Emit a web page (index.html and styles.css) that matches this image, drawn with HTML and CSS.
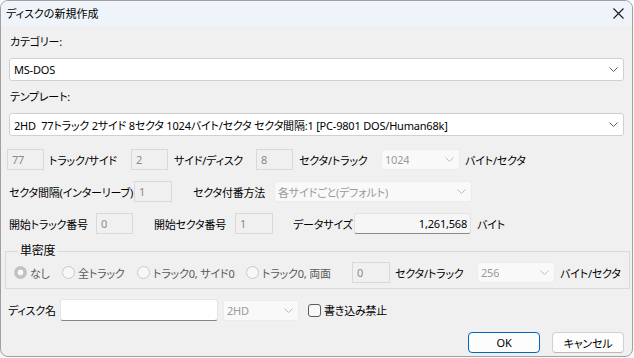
FILE: index.html
```html
<!DOCTYPE html>
<html lang="ja">
<head>
    <meta charset="UTF-8">
    <title>ディスクの新規作成</title>
    <link rel="stylesheet" href="styles.css">
</head>
<body>
<div class="window">
    <div class="titlebar">
        <span class="title">ディスクの新規作成</span>
        <svg class="close" width="11" height="11" viewBox="0 0 11 11">
            <path d="M0.5 0.5 L10.5 10.5 M10.5 0.5 L0.5 10.5" stroke="#1b1b1b" stroke-width="1.1" fill="none"/>
        </svg>
    </div>
    <div class="content">
        <div class="caption cap-top">カテゴリー:</div>
        <div class="combo wide">
            <span class="combo-text">MS-DOS</span>
            <svg class="chev" width="9" height="5" viewBox="0 0 9 5"><path d="M0.5 0.5 L4.5 4.5 L8.5 0.5" stroke="#5e5e5e" fill="none"/></svg>
        </div>
        <div class="caption">テンプレート:</div>
        <div class="combo wide">
            <span class="combo-text">2HD&nbsp; 77トラック 2サイド 8セクタ 1024バイト/セクタ セクタ間隔:1 [PC-9801 DOS/Human68k]</span>
            <svg class="chev" width="9" height="5" viewBox="0 0 9 5"><path d="M0.5 0.5 L4.5 4.5 L8.5 0.5" stroke="#5e5e5e" fill="none"/></svg>
        </div>

        <div class="row row-first">
            <span class="edit w37">77</span>
            <span class="lbl ml5 w82">トラック/サイド</span>
            <span class="edit w37">2</span>
            <span class="lbl ml6 w82">サイド/ディスク</span>
            <span class="edit w37">8</span>
            <span class="lbl ml6 w82">セクタ/トラック</span>
            <div class="combo off w79">
                <span class="combo-text">1024</span>
                <svg class="chev" width="9" height="5" viewBox="0 0 9 5"><path d="M0.5 0.5 L4.5 4.5 L8.5 0.5" stroke="#bdbdbd" fill="none"/></svg>
            </div>
            <span class="lbl ml5">バイト/セクタ</span>
        </div>

        <div class="row">
            <span class="lbl ml2 w125">セクタ間隔(インターリーブ)</span>
            <span class="edit w38">1</span>
            <span class="lbl ml21 w81">セクタ付番方法</span>
            <div class="combo off w198">
                <span class="combo-text">各サイドごと(デフォルト)</span>
                <svg class="chev" width="9" height="5" viewBox="0 0 9 5"><path d="M0.5 0.5 L4.5 4.5 L8.5 0.5" stroke="#bdbdbd" fill="none"/></svg>
            </div>
        </div>

        <div class="row">
            <span class="lbl ml2 w87">開始トラック番号</span>
            <span class="edit w37">0</span>
            <span class="lbl ml21 w81">開始セクタ番号</span>
            <span class="edit w38">1</span>
            <span class="lbl ml20 w61">データサイズ</span>
            <span class="readout">1,261,568</span>
            <span class="lbl ml6">バイト</span>
        </div>

        <fieldset class="group">
            <legend>単密度</legend>
            <div class="row">
                <label class="opt w48"><span class="radio on"></span>なし</label>
                <label class="opt w75"><span class="radio"></span>全トラック</label>
                <label class="opt w109"><span class="radio"></span>トラック0, サイド0</label>
                <label class="opt w106"><span class="radio"></span>トラック0, 両面</label>
                <span class="edit w38">0</span>
                <span class="lbl ml5 w82">セクタ/トラック</span>
                <div class="combo off w78">
                    <span class="combo-text">256</span>
                    <svg class="chev" width="9" height="5" viewBox="0 0 9 5"><path d="M0.5 0.5 L4.5 4.5 L8.5 0.5" stroke="#bdbdbd" fill="none"/></svg>
                </div>
                <span class="lbl ml5">バイト/セクタ</span>
            </div>
        </fieldset>

        <div class="row row-name">
            <span class="lbl ml1 w52">ディスク名</span>
            <span class="textbox"></span>
            <div class="combo off w76 ml5">
                <span class="combo-text">2HD</span>
                <svg class="chev" width="9" height="5" viewBox="0 0 9 5"><path d="M0.5 0.5 L4.5 4.5 L8.5 0.5" stroke="#bdbdbd" fill="none"/></svg>
            </div>
            <label class="check"><span class="box"></span>書き込み禁止</label>
        </div>

        <div class="buttons">
            <span class="btn default">OK</span>
            <span class="btn">キャンセル</span>
        </div>
    </div>
</div>
</body>
</html>
```

FILE: styles.css
```css
* {
    box-sizing: border-box;
}

body {
    margin: 0;
    background: #f9f9f9;
    font-family: "Noto Sans", "Noto Sans CJK JP", sans-serif;
    font-size: 11px;
    letter-spacing: -0.2px;
    color: #000;
    font-feature-settings: "palt";
}

.window {
    width: 633px;
    height: 357px;
    border: 1px solid #a0a0a0;
    border-radius: 8px;
    background: #f0f0f0;
    overflow: hidden;
}

.titlebar {
    height: 25px;
    background: #eef4f9;
    display: flex;
    align-items: center;
    justify-content: space-between;
    padding: 0 8px 0 5px;
}

.title {
    line-height: 25px;
    letter-spacing: 0;
}

.content {
    padding: 0 8px 0 6px;
}

.caption {
    height: 22px;
    line-height: 22px;
    padding-left: 3px;
    margin-top: 5px;
}

.combo {
    height: 23px;
    display: flex;
    align-items: center;
    justify-content: space-between;
    background: #fff;
    border: 1px solid #d0d0d0;
    border-radius: 3px;
    padding: 0 5px 0 4px;
    white-space: nowrap;
}

.combo.wide {
    margin-top: 5px;
    margin-left: 2px;
    width: 615px;
}

.combo.off {
    height: 21px;
    background: #f9f9f9;
    border-color: #ebebeb;
    color: #9a9a9a;
    padding-left: 3px;
}

.combo-text {
    overflow: hidden;
}

.chev {
    flex: none;
}

.row {
    display: flex;
    align-items: center;
    height: 21px;
    margin-top: 11px;
    white-space: nowrap;
}

.row-first {
    margin-top: 13px;
}

.edit {
    height: 21px;
    display: flex;
    align-items: center;
    border: 1px solid #d9d9d9;
    background: #f0f0f0;
    color: #8a8a8a;
    padding-left: 4px;
}

.readout {
    width: 117px;
    height: 21px;
    display: flex;
    align-items: center;
    justify-content: flex-end;
    padding-right: 3px;
    background: #f6f6f6;
    border: 1px solid #e2e2e2;
    border-bottom-color: #8a8a8a;
    border-radius: 3px;
}

.lbl {
    flex: none;
}

.group {
    margin: 9px -4px 0 -2px;
    padding: 3px 8px 5px 8px;
    border: 1px solid #dadada;
}

.group legend {
    padding: 0 2px;
    margin-left: 4px;
    line-height: 16px;
    font-size: 12px;
}

.group .row {
    margin-top: 0;
}

.opt {
    display: flex;
    align-items: center;
    color: #5a5a5a;
    flex: none;
}

.radio {
    width: 13px;
    height: 13px;
    border-radius: 50%;
    border: 1px solid #c8c8c8;
    background: #f7f7f7;
    margin-right: 3px;
    flex: none;
}

.radio.on {
    border-color: #c2c2c2;
    background: radial-gradient(circle, #fafafa 0 2.6px, #c2c2c2 3.2px);
}

.row-name {
    height: 22px;
    margin-top: 10px;
}

.textbox {
    width: 158px;
    height: 22px;
    background: #fff;
    border: 1px solid #e5e5e5;
    border-bottom-color: #858585;
    border-radius: 3px;
}

.check {
    display: flex;
    align-items: center;
    margin-left: 9px;
}

.check .box {
    width: 13px;
    height: 13px;
    border: 1px solid #5b5b5b;
    border-radius: 3px;
    background: #f8f8f8;
    margin-right: 3px;
}

.buttons {
    display: flex;
    justify-content: flex-end;
    gap: 12px;
    margin-top: 11px;
}

.btn {
    width: 72px;
    height: 21px;
    display: flex;
    align-items: center;
    justify-content: center;
    background: #fdfdfd;
    border: 1px solid #d0d0d0;
    border-bottom-color: #bababa;
    border-radius: 4px;
}

.btn.default {
    border-color: #0067c0;
}

.ml1 { margin-left: 1px; }
.ml2 { margin-left: 2px; }
.ml5 { margin-left: 5px; }
.ml6 { margin-left: 6px; }
.ml20 { margin-left: 20px; }
.ml21 { margin-left: 21px; }

.w37 { width: 37px; }
.w38 { width: 38px; }
.w48 { width: 48px; }
.w52 { width: 52px; }
.w61 { width: 61px; }
.w75 { width: 75px; }
.w76 { width: 76px; }
.w78 { width: 78px; }
.w79 { width: 79px; }
.w81 { width: 81px; }
.w82 { width: 82px; }
.w87 { width: 87px; }
.w106 { width: 106px; }
.w109 { width: 109px; }
.w125 { width: 125px; }
.w198 { width: 198px; }
```
